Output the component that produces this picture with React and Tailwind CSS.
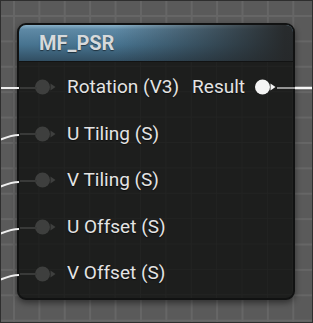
const inputs = ["U Tiling (S)", "V Tiling (S)", "U Offset (S)", "V Offset (S)"];

function Pin({ lit }) {
    const fill = lit ? "#f4f4f4" : "#3e3f3e";
    return (
        <svg width="22" height="16" viewBox="0 0 22 16" className="shrink-0">
            <circle cx="7.5" cy="8" r="7.5" fill={fill} />
            <polygon points="15.5,4.5 20.5,8 15.5,11.5" fill={fill} />
        </svg>
    );
}

function Wires() {
    // wire ends at the node's left edge (x=17), row centres 87/133/180/227/273
    const curved = [133, 180, 227, 273];
    return (
        <svg className="pointer-events-none absolute inset-0" width="313" height="323">
            <line x1="0" y1="87" x2="18" y2="87" stroke="#eeeeee" strokeWidth="2" />
            {curved.map((y) => (
                <path
                    key={y}
                    d={`M -4 ${y + 7} C 6 ${y + 3}, 10 ${y + 1}, 18 ${y + 1}`}
                    fill="none"
                    stroke="#eeeeee"
                    strokeWidth="2"
                />
            ))}
            {[87, 133, 180, 227, 273].map((y) => (
                <line key={y} x1="19" y1={y} x2="36" y2={y} stroke="#393a39" strokeWidth="2" />
            ))}
            <line x1="276" y1="87" x2="294" y2="87" stroke="#bdbdbd" strokeWidth="1.5" />
            <line x1="294" y1="87" x2="313" y2="87" stroke="#f6f6f6" strokeWidth="2.5" />
        </svg>
    );
}

export default function App() {
    return (
        <div className="relative h-[323px] w-[313px] overflow-hidden border border-[#2e2e2e] bg-[#5a5a5a] bg-[linear-gradient(to_right,#666666_2px,transparent_2px),linear-gradient(to_bottom,#666666_2px,transparent_2px)] bg-[size:25.4px_25.4px] bg-[position:12px_14px] pl-[16px] pt-[22px] font-['Roboto',sans-serif]">
            {/* Node */}
            <div className="flex h-[277px] w-[278px] flex-col overflow-hidden rounded-[9px] border-2 border-[#111212] bg-[#1d1e1d] bg-[linear-gradient(to_right,#222322_1px,transparent_1px),linear-gradient(to_bottom,#222322_1px,transparent_1px)] bg-[size:25.4px_25.4px] bg-[position:-6px_-10px] shadow-[0_3px_6px_rgba(0,0,0,0.45)]">
                <div className="flex h-[37px] shrink-0 items-center border-b border-[#121313] bg-[linear-gradient(to_right,transparent_35%,rgba(38,40,41,0.97)_97%),linear-gradient(to_bottom,#8ab1c8_0%,#5e89a5_12%,#47738f_55%,#314e62_100%)] pl-[20px]">
                    <span className="text-[20px] font-bold text-[#d6d9db] [text-shadow:0_1px_1px_rgba(0,0,0,0.5)]">
                        MF_PSR
                    </span>
                </div>

                <div className="flex flex-col pt-[2px] text-[19px] text-[#e4e4e4] [text-shadow:0_1px_1px_rgba(0,0,0,0.6)]">
                    <div className="flex h-[46.6px] items-center justify-between pl-[16px] pr-[16px]">
                        <div className="flex items-center gap-[10px]">
                            <Pin />
                            <span>Rotation (V3)</span>
                        </div>
                        <div className="flex items-center gap-[10px]">
                            <span>Result</span>
                            <Pin lit />
                        </div>
                    </div>
                    {inputs.map((label) => (
                        <div key={label} className="flex h-[46.6px] items-center gap-[10px] pl-[16px]">
                            <Pin />
                            <span>{label}</span>
                        </div>
                    ))}
                </div>
            </div>

            <Wires />
        </div>
    );
}
